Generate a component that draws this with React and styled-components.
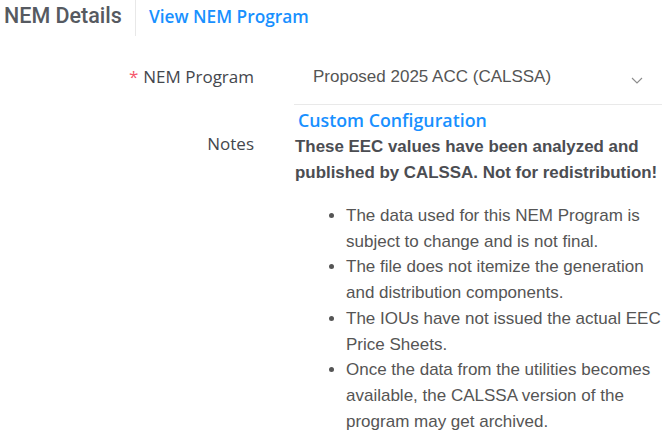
import React from 'react';
import styled, { createGlobalStyle } from 'styled-components';

const GlobalStyle = createGlobalStyle`
  html, body {
    margin: 0;
    padding: 0;
    background: #ffffff;
  }
  body {
    font-family: Arial, "Liberation Sans", Helvetica, sans-serif;
    color: #555555;
  }
`;

const bodyFont = `Arial, "Liberation Sans", Helvetica, sans-serif`;
const uiFont = `"Open Sans", "Liberation Sans", sans-serif`;

const Page = styled.div`
  width: 662px;
  height: 440px;
  overflow: hidden;
`;

const Header = styled.div`
  display: flex;
  align-items: center;
  height: 36px;
`;

const Title = styled.h2`
  margin: 0;
  padding: 0 13px 5px 4px;
  height: 36px;
  display: flex;
  align-items: center;
  border-right: 1px solid #e8e8e8;
  font-family: Roboto, "Liberation Sans", sans-serif;
  font-weight: 500;
  font-size: 21.5px;
  color: #565a61;
  box-sizing: border-box;
`;

const TabLink = styled.a`
  margin-left: 13px;
  margin-bottom: 3px;
  font-family: ${uiFont};
  font-weight: 600;
  font-size: 17.3px;
  color: #1890ff;
  text-decoration: none;
  cursor: pointer;
`;

const Form = styled.div`
  margin-top: 19px;
  display: grid;
  grid-template-columns: 254px 1fr;
  column-gap: 40px;
`;

const Label = styled.div`
  text-align: right;
  font-family: ${uiFont};
  font-size: 17px;
  line-height: 24px;
  color: #44474d;
  padding-top: ${(p) => p.$top || 0}px;
`;

const Required = styled.span`
  color: #f5576c;
  margin-right: 5px;
`;

const Select = styled.div`
  display: flex;
  align-items: center;
  justify-content: space-between;
  height: 50px;
  padding: 0 18px 6px 19px;
  border-bottom: 1px solid #e9e9e9;
  box-sizing: border-box;
  font-family: ${bodyFont};
  font-size: 17px;
  color: #555555;
`;

const Chevron = styled.svg`
  width: 14px;
  height: 14px;
  margin-top: 6px;
`;

const Notes = styled.div`
  padding-top: 3px;
  font-family: ${bodyFont};
`;

const ConfigLink = styled.a`
  display: block;
  margin-left: 4px;
  font-family: ${uiFont};
  font-weight: 600;
  font-size: 17.8px;
  line-height: 24px;
  color: #1890ff;
  text-decoration: none;
`;

const Warning = styled.p`
  margin: 2px 0 0 1px;
  font-family: ${bodyFont};
  font-weight: 700;
  font-size: 16.9px;
  line-height: 26px;
  color: #4b4d52;
`;

const List = styled.ul`
  margin: 17px 0 0 0;
  padding-left: 52px;
  font-family: ${bodyFont};
  font-size: 17px;
  line-height: 25.7px;
  color: #555555;
`;

const items = [
  'The data used for this NEM Program is subject to change and is not final.',
  'The file does not itemize the generation and distribution components.',
  'The IOUs have not issued the actual EEC Price Sheets.',
  'Once the data from the utilities becomes available, the CALSSA version of the program may get archived.',
];

export default function App() {
  return (
    <Page>
      <GlobalStyle />
      <Header>
        <Title>NEM Details</Title>
        <TabLink>View NEM Program</TabLink>
      </Header>
      <Form>
        <Label $top={10}>
          <Required>*</Required>NEM Program
        </Label>
        <Select>
          <span>Proposed 2025 ACC (CALSSA)</span>
          <Chevron viewBox="0 0 14 14" fill="none" stroke="#8c8c8c" strokeWidth="1.1">
            <path d="M2 5 L7 10 L12 5" />
          </Chevron>
        </Select>
        <Label $top={27}>Notes</Label>
        <Notes>
          <ConfigLink>Custom Configuration</ConfigLink>
          <Warning>
            These EEC values have been analyzed and published by CALSSA. Not for redistribution!
          </Warning>
          <List>
            {items.map((t) => (
              <li key={t}>{t}</li>
            ))}
          </List>
        </Notes>
      </Form>
    </Page>
  );
}
